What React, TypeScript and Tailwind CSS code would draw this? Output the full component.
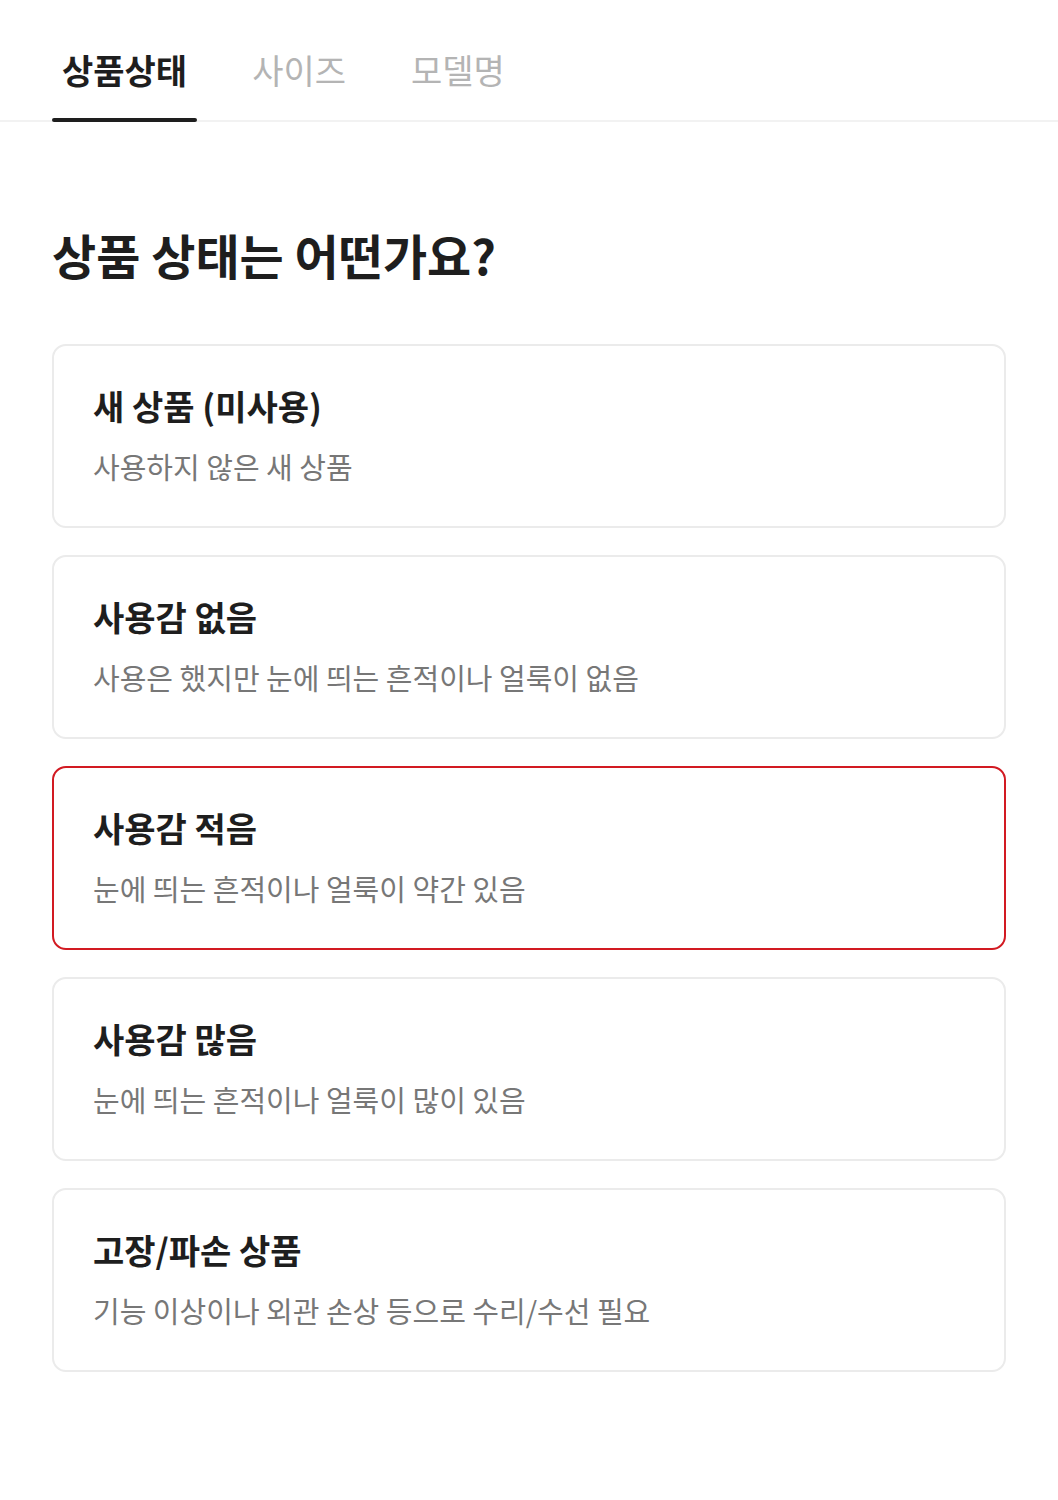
const tabs = ["상품상태", "사이즈", "모델명"];

const conditions = [
  { title: "새 상품 (미사용)", desc: "사용하지 않은 새 상품" },
  { title: "사용감 없음", desc: "사용은 했지만 눈에 띄는 흔적이나 얼룩이 없음" },
  { title: "사용감 적음", desc: "눈에 띄는 흔적이나 얼룩이 약간 있음" },
  { title: "사용감 많음", desc: "눈에 띄는 흔적이나 얼룩이 많이 있음" },
  { title: "고장/파손 상품", desc: "기능 이상이나 외관 손상 등으로 수리/수선 필요" },
];

const App = () => {
  const selected = 2;
  const activeTab = 0;

  return (
    <div className="min-h-[1500px] w-full bg-white font-['Noto_Sans_CJK_KR',sans-serif] text-[#1e1e1e]">
      {/* 탭 */}
      <div className="flex border-b-2 border-[#f2f2f2] px-[52px]">
        {tabs.map((tab, i) => (
          <div
            key={tab}
            className={`relative mr-[45px] px-[10px] pb-[26px] pt-[46px] text-[34px] leading-[48px] ${
              i === activeTab ? "font-bold text-[#1e1e1e]" : "text-[#b4b4b4]"
            }`}
          >
            {tab}
            {i === activeTab && (
              <span className="absolute -bottom-[2px] left-0 right-0 h-[4px] rounded-full bg-[#1e1e1e]" />
            )}
          </div>
        ))}
      </div>

      <div className="px-[52px] pt-[102px]">
        {/* 질문 */}
        <h1 className="text-[48px] font-bold leading-[60px]">
          상품 상태는 어떤가요?
        </h1>

        {/* 상태 목록 */}
        <div className="mt-[60px] flex flex-col gap-[27px]">
          {conditions.map((item, i) => (
            <div
              key={item.title}
              className={`flex h-[184px] flex-col justify-center rounded-[14px] border-2 bg-white px-[39px] ${
                i === selected ? "border-[#d21a22]" : "border-[#ebebeb]"
              }`}
            >
              <span className="text-[34px] font-bold leading-[40px]">
                {item.title}
              </span>
              <span className="mt-[20px] text-[29px] leading-[40px] text-[#777777]">
                {item.desc}
              </span>
            </div>
          ))}
        </div>
      </div>
    </div>
  );
};

export default App;
